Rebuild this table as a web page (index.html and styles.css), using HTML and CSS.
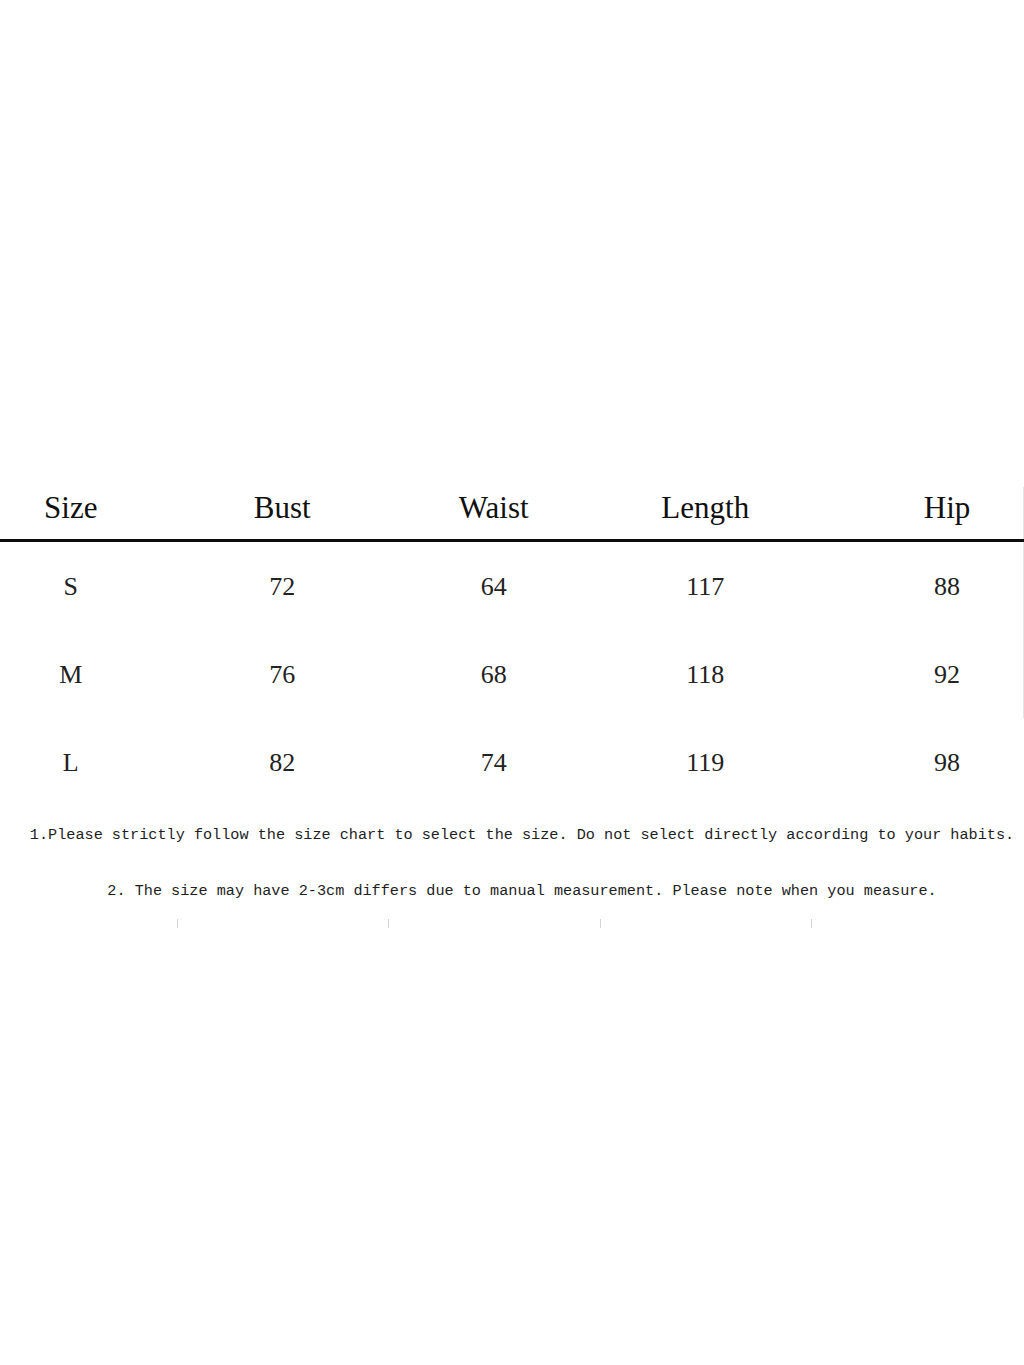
FILE: index.html
```html
<!DOCTYPE html>
<html>
<head>
<meta charset="utf-8">
<link rel="stylesheet" href="styles.css">
</head>
<body>
<div class="page">
  <div class="spacer"></div>
  <div class="chart">
    <div class="row head edge">
      <div class="cells">
        <div class="cell">Size</div>
        <div class="cell">Bust</div>
        <div class="cell">Waist</div>
        <div class="cell">Length</div>
        <div class="cell">Hip</div>
      </div>
    </div>
    <div class="rule"></div>
    <div class="row data edge">
      <div class="cells">
        <div class="cell">S</div>
        <div class="cell">72</div>
        <div class="cell">64</div>
        <div class="cell">117</div>
        <div class="cell">88</div>
      </div>
    </div>
    <div class="row data edge">
      <div class="cells">
        <div class="cell">M</div>
        <div class="cell">76</div>
        <div class="cell">68</div>
        <div class="cell">118</div>
        <div class="cell">92</div>
      </div>
    </div>
    <div class="row data">
      <div class="cells">
        <div class="cell">L</div>
        <div class="cell">82</div>
        <div class="cell">74</div>
        <div class="cell">119</div>
        <div class="cell">98</div>
      </div>
    </div>
  </div>
  <div class="notes">
    <p class="note">1.Please strictly follow the size chart to select the size. Do not select directly according to your habits.</p>
    <p class="note">2. The size may have 2-3cm differs due to manual measurement. Please note when you measure.</p>
  </div>
  <div class="row ticks">
    <div class="cells">
      <div class="tick"></div>
      <div class="tick mark"></div>
      <div class="tick mark"></div>
      <div class="tick mark"></div>
      <div class="tick mark"></div>
    </div>
  </div>
</div>
</body>
</html>
```

FILE: styles.css
```css
html, body {
  margin: 0;
  padding: 0;
  background: #ffffff;
}

.page {
  width: 1024px;
  height: 1365px;
  overflow: hidden;
}

.spacer {
  height: 487px;
}

.row {
  width: 1024px;
  overflow: hidden;
}

.row.edge {
  width: 1023px;
  border-right: 1px solid #e4e4e4;
}

.cells {
  display: grid;
  grid-template-columns: 211.5px 211.5px 211.5px 211.5px 272px;
  margin-left: -35px;
  width: 1118px;
}

.cell {
  text-align: center;
  white-space: nowrap;
}

.head .cell {
  font-family: "Liberation Serif", "DejaVu Serif", serif;
  font-size: 31px;
  line-height: 31px;
  color: #111111;
  padding-top: 5px;
  padding-bottom: 16px;
}

.rule {
  height: 3px;
  background: #0c0c0c;
  width: 1024px;
}

.data .cell {
  font-family: "Liberation Serif", "DejaVu Serif", serif;
  font-size: 26px;
  line-height: 26px;
  color: #222222;
  padding-top: 32px;
  padding-bottom: 30px;
}

.notes {
  padding-left: 20px;
  padding-top: 1px;
  width: 1004px;
}

.note {
  margin: 0;
  text-align: center;
  white-space: nowrap;
  font-family: "Liberation Mono", "DejaVu Sans Mono", monospace;
  font-size: 15.2px;
  line-height: 56px;
  color: #1e1e1e;
}

.tick {
  height: 9px;
}

.tick.mark {
  border-left: 1px solid #d4d4d4;
}
```
